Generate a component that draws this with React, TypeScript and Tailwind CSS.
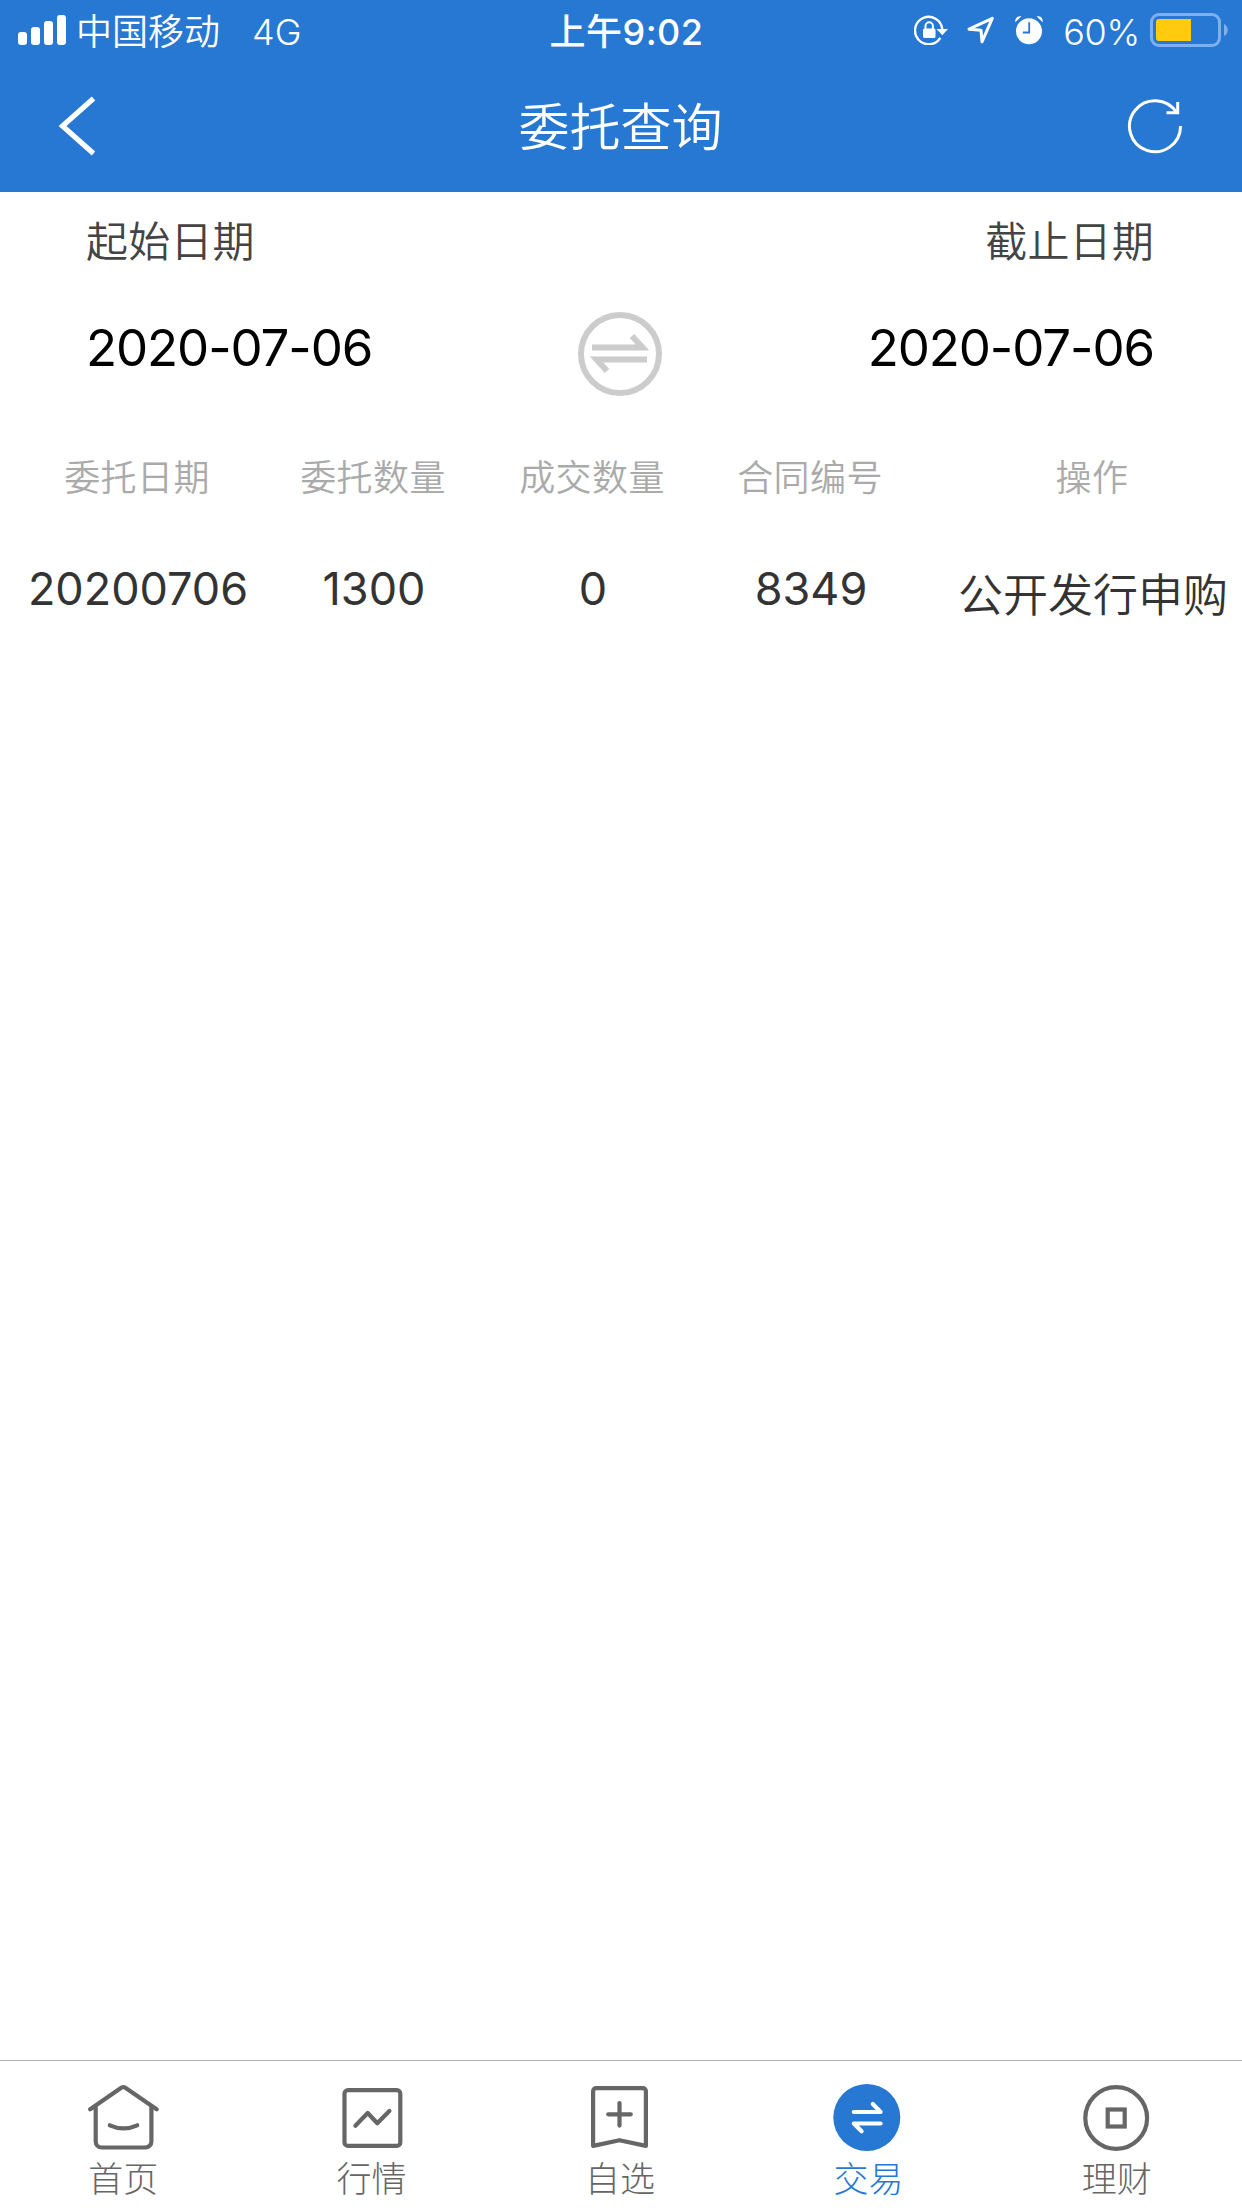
import type { ReactNode } from "react"

const columns = ["委托日期", "委托数量", "成交数量", "合同编号", "操作"]

const orders = [
  { date: "20200706", amount: "1300", filled: "0", contract: "8349", action: "公开发行申购" },
]

function SignalIcon() {
  return (
    <svg width="48" height="30" viewBox="0 0 48 30" fill="#fff">
      <rect x="0" y="17" width="9" height="13" rx="3" />
      <rect x="13" y="12" width="9" height="18" rx="3" />
      <rect x="26" y="6" width="9" height="24" rx="3" />
      <rect x="39" y="0" width="9" height="30" rx="3" />
    </svg>
  )
}

function RotationLockIcon() {
  return (
    <svg width="34" height="30" viewBox="0 0 34 30" fill="none">
      <path d="M28.3 14A13.7 13.7 0 1 0 26.3 22.8" stroke="#fff" strokeWidth="2.4" />
      <path d="M22.5 14H34l-5.7 6.3z" fill="#fff" />
      <rect x="9" y="13.5" width="12.5" height="9.5" rx="1.5" fill="#fff" />
      <path d="M11.5 14v-3a3.7 3.7 0 0 1 7.4 0v3" stroke="#fff" strokeWidth="2" />
    </svg>
  )
}

function LocationIcon() {
  return (
    <svg width="28" height="28" viewBox="0 0 28 28" fill="none">
      <path
        d="M2 13.2 25.3 2.3 15 25.8 14 14.2z"
        stroke="#fff"
        strokeWidth="3"
        strokeLinejoin="round"
      />
    </svg>
  )
}

function AlarmIcon() {
  return (
    <svg width="28" height="29" viewBox="0 0 28 29" fill="none">
      <circle cx="14" cy="15.3" r="13" fill="#fff" />
      <path d="M0.3 6.2C-0.2 2.3 2.3-.3 6.3.4zM27.7 6.2C28.2 2.3 25.7-.3 21.7.4z" fill="#fff" />
      <path d="M14.2 6.3v10.2H7.8" stroke="#2678d3" strokeWidth="1.8" />
    </svg>
  )
}

function BatteryIcon() {
  return (
    <svg width="79" height="34" viewBox="0 0 79 34" fill="none">
      <rect x="1.5" y="1.5" width="68" height="31" rx="7.5" stroke="#7fb0ee" strokeWidth="3" />
      <path d="M9 6h32v22H9a3 3 0 0 1-3-3V9a3 3 0 0 1 3-3z" fill="#ffcb0e" />
      <path d="M74 11c5 2 5 10 0 12z" fill="#7fb0ee" />
    </svg>
  )
}

function BackIcon() {
  return (
    <svg width="40" height="62" viewBox="0 0 40 62" fill="none">
      <path d="M35.5 3.5 4.5 31l31 27.5" stroke="#fff" strokeWidth="5.2" />
    </svg>
  )
}

function RefreshIcon() {
  return (
    <svg width="56" height="56" viewBox="0 0 56 56" fill="none" stroke="#fff" strokeWidth="3">
      <path d="M53.5 28A25.5 25.5 0 1 1 49.5 14.5" />
      <path d="M39.5 14.7h11.2V4" />
    </svg>
  )
}

function SwapIcon() {
  return (
    <svg width="84" height="84" viewBox="0 0 84 84" fill="none" stroke="#ccc">
      <circle cx="42" cy="42" r="39" strokeWidth="6" />
      <path d="M14 35.5H64.5L54 24" strokeWidth="6" />
      <path d="M69 47.5H18.5L29 59" strokeWidth="6" />
    </svg>
  )
}

function TabSvg({ children }: { children: ReactNode }) {
  return (
    <svg
      width="72"
      height="72"
      viewBox="0 0 72 72"
      fill="none"
      stroke="#666"
      strokeWidth="4.2"
      strokeLinecap="round"
      strokeLinejoin="round"
    >
      {children}
    </svg>
  )
}

const tabs = [
  {
    label: "首页",
    active: false,
    icon: (
      <TabSvg>
        <path d="M2.2 27.3 33.6 5.6q1.7-1.1 3.4 0L68.6 27.3" />
        <path d="M7.7 25v34.5a6 6 0 0 0 6 6H57.4a6 6 0 0 0 6-6V25" />
        <path d="M21.8 43.3Q35.5 49.5 49.2 43.3" />
      </TabSvg>
    ),
  },
  {
    label: "行情",
    active: false,
    icon: (
      <TabSvg>
        <rect x="7.5" y="8.1" width="55.8" height="55.8" rx="3.5" />
        <path d="M18.4 43.7 30.7 31 40.3 41.3 52.4 29" />
      </TabSvg>
    ),
  },
  {
    label: "自选",
    active: false,
    icon: (
      <TabSvg>
        <path d="M8.1 63.9V9.1a3 3 0 0 1 3-3H57.9a3 3 0 0 1 3 3V63.9L34.5 58.2z" />
        <path d="M34.5 21v22.6M23.2 32.3h22.6" />
      </TabSvg>
    ),
  },
  {
    label: "交易",
    active: true,
    icon: (
      <TabSvg>
        <circle cx="33.8" cy="35.5" r="33.5" fill="#2678d3" stroke="none" />
        <path d="M20.8 30H47.6L39.8 22" stroke="#fff" />
        <path d="M47.6 41.5H20.8L28.6 49.3" stroke="#fff" />
      </TabSvg>
    ),
  },
  {
    label: "理财",
    active: false,
    icon: (
      <TabSvg>
        <circle cx="34.2" cy="36" r="30.9" />
        <rect x="25.7" y="27.5" width="17" height="17" strokeLinejoin="miter" />
      </TabSvg>
    ),
  },
]

function DateField({ label, value, end }: { label: string; value: string; end?: boolean }) {
  return (
    <div className={end ? "flex w-[290px] flex-col items-end" : "flex w-[290px] flex-col items-start"}>
      <div className="mt-[19px] text-[42px] leading-[62px] font-[350] tracking-[0.2px] text-[#444]">
        {label}
      </div>
      <div className="mt-[44px] text-[51px] leading-[62px] tracking-[-1.1px] whitespace-nowrap text-black">
        {value}
      </div>
    </div>
  )
}

export default function App() {
  return (
    <div className="flex h-[2208px] w-[1242px] flex-col overflow-hidden bg-white font-['Inter','Noto_Sans_CJK_SC',sans-serif] text-[#333]">
      <header className="h-48 bg-[#2678d3] text-white">
        <div className="grid h-[60px] grid-cols-3 items-center text-[36px] leading-[56px]">
          <div className="flex items-center pl-[18px]">
            <SignalIcon />
            <span className="ml-[10px] pt-[4px] font-[350]">中国移动</span>
            <span className="ml-[32px] pt-[3px] font-[350]">4G</span>
          </div>
          <div className="pt-[3px] pl-[11px] text-center font-medium tracking-[0.5px]">上午9:02</div>
          <div className="flex items-center justify-end pr-[13px]">
            <RotationLockIcon />
            <span className="ml-[19px]"><LocationIcon /></span>
            <span className="ml-[20px]"><AlarmIcon /></span>
            <span className="ml-[20px] pt-[3px] font-[350] tracking-[-0.3px]">60%</span>
            <span className="ml-[10px]"><BatteryIcon /></span>
          </div>
        </div>

        <div className="flex h-[132px] items-center justify-between pr-[59px] pl-[58px]">
          <button className="flex w-[56px]"><BackIcon /></button>
          <h1 className="pt-[3px] text-[51px] leading-[76px] font-[350]">委托查询</h1>
          <button><RefreshIcon /></button>
        </div>
      </header>

      <section className="flex h-[259px] items-start justify-between pr-[88px] pl-[86px]">
        <DateField label="起始日期" value="2020-07-06" />
        <button className="mt-[120px]"><SwapIcon /></button>
        <DateField label="截止日期" value="2020-07-06" end />
      </section>

      <main className="flex-1">
        <div className="grid grid-cols-[206px_266px_172px_264px_300px] pl-[34px] text-center text-[36px] leading-[54px] font-[350] tracking-[0.4px] whitespace-nowrap text-[#aaa]">
          {columns.map((name) => (
            <span key={name}>{name}</span>
          ))}
        </div>

        {orders.map((order) => (
          <div
            key={order.contract}
            className="mt-[52px] grid grid-cols-[206px_266px_172px_264px_300px] justify-items-center pl-[35px] text-[45px] leading-[64px] whitespace-nowrap"
          >
            <span>{order.date}</span>
            <span>{order.amount}</span>
            <span>{order.filled}</span>
            <span>{order.contract}</span>
            <span className="pt-[7px] font-[350]">{order.action}</span>
          </div>
        ))}
      </main>

      <nav className="grid h-[148px] grid-cols-5 border-t border-[#b0b0b0] pt-[21px]">
        {tabs.map((tab) => (
          <button
            key={tab.label}
            className={
              tab.active
                ? "flex flex-col items-center text-[#2678d3]"
                : "flex flex-col items-center text-[#666]"
            }
          >
            {tab.icon}
            <span className="pr-[2px] text-[35px] leading-[50px] font-light">{tab.label}</span>
          </button>
        ))}
      </nav>
    </div>
  )
}
